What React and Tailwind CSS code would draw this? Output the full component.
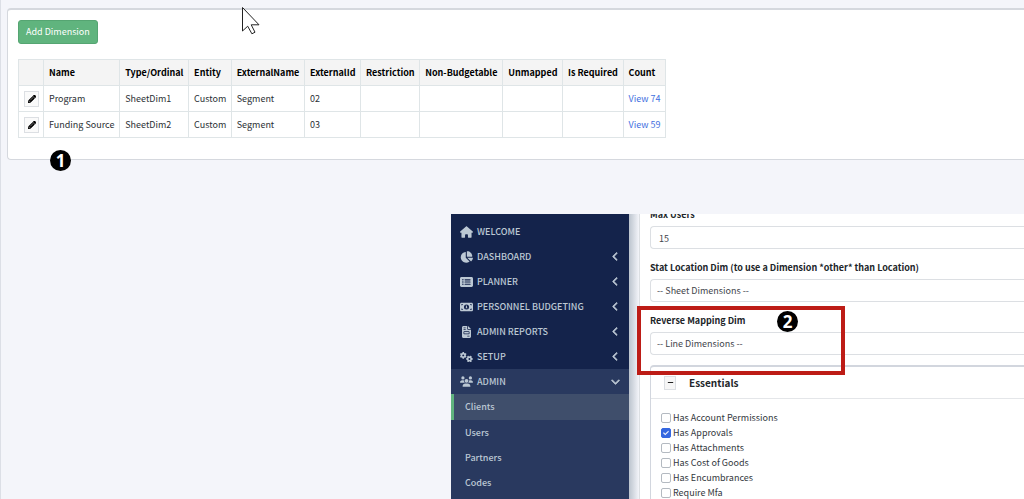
import { useState } from 'react';
import {
    FaHouse, FaChartPie, FaRectangleList, FaMoneyBill1, FaFileInvoice, FaGears, FaUsers,
    FaChevronLeft, FaChevronDown, FaPencil, FaMinus, FaCheck,
} from 'react-icons/fa6';

const COLUMNS = [
    'Name', 'Type/Ordinal', 'Entity', 'ExternalName', 'ExternalId', 'Restriction',
    'Non-Budgetable', 'Unmapped', 'Is Required', 'Count',
];

const DIMENSIONS = [
    { name: 'Program', type: 'SheetDim1', entity: 'Custom', externalName: 'Segment', externalId: '02', count: 74 },
    { name: 'Funding Source', type: 'SheetDim2', entity: 'Custom', externalName: 'Segment', externalId: '03', count: 59 },
];

const MENU = [
    { label: 'WELCOME', Icon: FaHouse },
    { label: 'DASHBOARD', Icon: FaChartPie, children: true },
    { label: 'PLANNER', Icon: FaRectangleList, children: true },
    { label: 'PERSONNEL BUDGETING', Icon: FaMoneyBill1, children: true },
    { label: 'ADMIN REPORTS', Icon: FaFileInvoice, children: true },
    { label: 'SETUP', Icon: FaGears, children: true },
];

const ADMIN_PAGES = ['Clients', 'Users', 'Partners', 'Codes'];

const ESSENTIALS = [
    'Has Account Permissions', 'Has Approvals', 'Has Attachments',
    'Has Cost of Goods', 'Has Encumbrances', 'Require Mfa',
];

const CELL = 'border border-[#dfe5e7] pl-[5px] pr-1 pt-px text-left whitespace-nowrap';
const FIELD = 'block w-full h-[23px] rounded-l-[4px] border border-r-0 border-[#dcdfe3] bg-white px-[6px] pt-px text-[9px] text-[#3f444b] appearance-none';
const LABEL = 'block h-[14px] leading-4 font-bold text-[#212529]';

function StepBadge({ children, className }) {
    return (
        <span className={`absolute flex items-center justify-center w-[21px] h-[21px] rounded-full bg-black text-white text-[17px] leading-none font-bold font-['Noto_Sans',sans-serif] ${className}`}>
            {children}
        </span>
    );
}

function DimensionPanel() {
    return (
        <section className="relative ml-[6px] mt-2 rounded-l-[4px] border border-r-0 border-t-2 border-[#d5d8de] bg-white pl-[10px] pt-[10px] pb-[21px]">
            <button type="button" className="flex items-center h-6 px-[7px] rounded-[3px] border border-[#55a572] bg-[#60b47e] text-white">
                Add Dimension
            </button>
            <table className="mt-[15px] w-[648px] border-collapse">
                <thead className="bg-[#f4f4f4] text-black">
                    <tr className="h-[26px]">
                        <th className={`${CELL} w-[25px]`} aria-label="Edit" />
                        {COLUMNS.map(c => <th key={c} className={`${CELL} font-bold`}>{c}</th>)}
                    </tr>
                </thead>
                <tbody>
                    {DIMENSIONS.map(d => (
                        <tr key={d.name} className="h-[26px]">
                            <td className={CELL}>
                                <button type="button" aria-label={`Edit ${d.name}`} className="flex items-center justify-center w-[15px] h-4 border border-[#dcdfe3] bg-[#fafafa] text-black">
                                    <FaPencil size={8} stroke="currentColor" strokeWidth="30" />
                                </button>
                            </td>
                            <td className={CELL}>{d.name}</td>
                            <td className={CELL}>{d.type}</td>
                            <td className={CELL}>{d.entity}</td>
                            <td className={CELL}>{d.externalName}</td>
                            <td className={CELL}>{d.externalId}</td>
                            <td className={CELL} />
                            <td className={CELL} />
                            <td className={CELL} />
                            <td className={CELL} />
                            <td className={CELL}><a href="#view" className="text-[#3f6fe0]">View {d.count}</a></td>
                        </tr>
                    ))}
                </tbody>
            </table>
            <StepBadge className="left-[42px] -bottom-[12px]">1</StepBadge>
        </section>
    );
}

function Sidebar() {
    return (
        <nav className="w-[178px] shrink-0 bg-[#14234b] pt-[5px] font-medium text-[#bcc8d4]">
            {MENU.map(({ label, Icon, children }) => (
                <a key={label} href="#menu" className="flex items-center h-[25px] pl-[9px] pr-[9px]">
                    <Icon size={12} className="w-[13px] shrink-0" />
                    <span className="ml-1 flex-1">{label}</span>
                    {children && <FaChevronLeft size={9} stroke="currentColor" strokeWidth="40" />}
                </a>
            ))}
            <div className="h-full bg-[#29395f]">
                <a href="#menu" className="flex items-center h-[25px] pl-[9px] pr-[9px]">
                    <FaUsers size={13} className="w-[13px] shrink-0" />
                    <span className="ml-1 flex-1">ADMIN</span>
                    <FaChevronDown size={9} stroke="currentColor" strokeWidth="40" />
                </a>
                {ADMIN_PAGES.map((page, i) => (
                    <a
                        key={page} href="#page"
                        className={`flex items-center border-l-[3px] pl-[11px] ${i === 0 ? 'h-[26px] border-[#60b47e] bg-[#3f4e6b]' : 'h-[25px] border-transparent'}`}
                    >
                        {page}
                    </a>
                ))}
            </div>
        </nav>
    );
}

function ClientForm() {
    const [checked, setChecked] = useState({ 'Has Approvals': true });
    const toggle = name => setChecked(c => ({ ...c, [name]: !c[name] }));

    return (
        <form className="flex-1 min-w-0 border-l border-[#dcdfe3] bg-white pl-[10px]">
            <div className="-mt-[7px]">
                <label htmlFor="max-users" className={LABEL}>Max Users</label>
                <input id="max-users" type="text" defaultValue="15" className={`${FIELD} mt-[5px] pl-2`} />
            </div>
            <div className="mt-[11px]">
                <label htmlFor="stat-dim" className={LABEL}>Stat Location Dim (to use a Dimension *other* than Location)</label>
                <select id="stat-dim" className={`${FIELD} mt-[5px]`}>
                    <option>-- Sheet Dimensions --</option>
                </select>
            </div>
            <div className="relative mt-[11px]">
                <label htmlFor="reverse-dim" className={LABEL}>Reverse Mapping Dim</label>
                <select id="reverse-dim" className={`${FIELD} mt-[5px]`}>
                    <option>-- Line Dimensions --</option>
                </select>
                <div className="absolute -left-[13px] -top-[7px] z-10 w-[208px] h-[69px] border-4 border-[#bd1c16] pointer-events-none" />
                <StepBadge className="left-[127px] -top-[2px]">2</StepBadge>
            </div>
            <fieldset className="mt-[10px] border-l border-t-2 border-[#d2d6de] rounded-tl-[4px]">
                <div className="flex items-center h-8 border-b border-[#e4e6e9] pl-[13px]">
                    <button type="button" aria-label="Collapse Essentials" className="flex items-center justify-center w-3 h-[14px] border border-[#dcdfe3] bg-[#f6f6f6] text-[#222]">
                        <FaMinus size={7} />
                    </button>
                    <h2 className="ml-[13px] text-[10px] font-bold text-[#212529]">Essentials</h2>
                </div>
                <div className="pt-[11px] pl-[10px]">
                    {ESSENTIALS.map(name => (
                        <label key={name} className="flex items-center h-[15px] text-[#33383d]">
                            <span className="relative flex w-[10px] h-[10px]">
                                <input
                                    type="checkbox" checked={!!checked[name]} onChange={() => toggle(name)}
                                    className="appearance-none w-[10px] h-[10px] rounded-[2px] border border-[#b4bac1] bg-white checked:border-[#3567e0] checked:bg-[#3567e0]"
                                />
                                {checked[name] && <FaCheck size={6} stroke="currentColor" strokeWidth="40" className="absolute left-[2px] top-[2px] text-white pointer-events-none" />}
                            </span>
                            <span className="ml-[2px]">{name}</span>
                        </label>
                    ))}
                </div>
            </fieldset>
        </form>
    );
}

export default function App() {
    return (
        <div className="relative flex flex-col h-screen overflow-hidden border-l border-[#dcdfe6] bg-[#f4f5fa] font-['Noto_Sans_CJK_SC','Noto_Sans',sans-serif] text-[9px] text-[#2b3035]">
            <DimensionPanel />
            <div className="flex flex-1 min-h-0 mt-[54px] ml-[450px] overflow-hidden">
                <Sidebar />
                <div className="w-[10px] shrink-0 bg-linear-to-r from-[#bcc4ce] to-[#f4f5fa]" />
                <ClientForm />
            </div>
            <svg className="absolute left-[240px] top-[6px]" width="20" height="30" viewBox="0 0 20 30" fill="#fff" stroke="#222" strokeWidth="1">
                <path d="M1.5 1.5v23.5l5.2-4.8 4.2 7.6 3.1-1.6-3.8-7.4h7.8z" />
            </svg>
        </div>
    );
}
